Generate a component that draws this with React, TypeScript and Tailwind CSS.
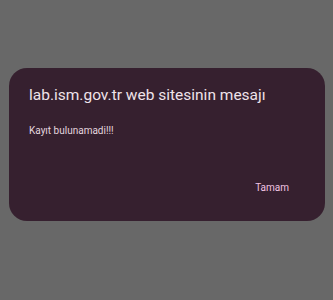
export default function App() {
  return (
    <div className="h-[300px] w-[333px] bg-[#686868] pt-[68px] pl-[9px]" style={{ fontFamily: "Roboto, sans-serif" }}>
      <div className="flex h-[153px] w-[316px] flex-col rounded-[18px] bg-[#36202f] px-5 pt-[17px]">
        <h1 className="text-[15.5px] leading-[20px] text-[#efe3ea]">lab.ism.gov.tr web sitesinin mesajı</h1>
        <p className="mt-[19px] text-[10px] leading-[14px] text-[#e4d6df]">Kayıt bulunamadi!!!</p>
        <div className="mt-auto mb-[26px] flex justify-end pr-[16px]">
          <button className="text-[10px] leading-[14px] text-[#f0c4e2]">Tamam</button>
        </div>
      </div>
    </div>
  );
}
